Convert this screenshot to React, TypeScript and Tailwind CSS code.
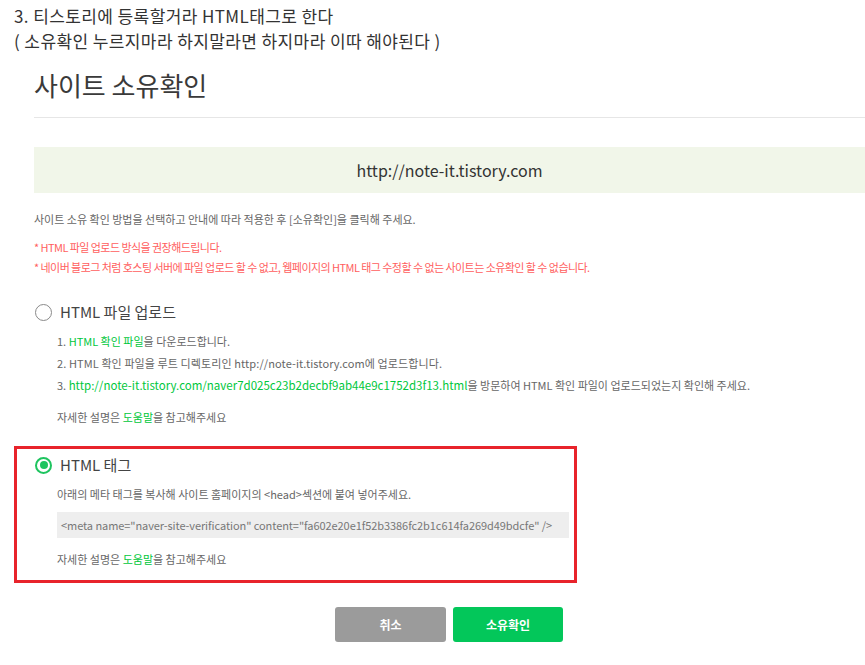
import React from 'react';

const FONT = "font-['Noto_Sans_CJK_KR','Noto_Sans',sans-serif]";

const Radio = ({ checked }: { checked?: boolean }) =>
  checked ? (
    <span className="flex h-[17px] w-[17px] items-center justify-center rounded-full border-[2px] border-[#1ec45f]">
      <span className="h-[8px] w-[8px] rounded-full bg-[#1ec45f]" />
    </span>
  ) : (
    <span className="h-[17px] w-[17px] rounded-full border-[1.5px] border-[#8a8a8a] bg-white" />
  );

const Help = () => (
  <p className="text-[11px] leading-[16px] text-[#666]">
    자세한 설명은 <span className="text-[#00c73c]">도움말</span>을 참고해주세요
  </p>
);

export default function App() {
  return (
    <div className={`${FONT} min-h-[665px] overflow-hidden bg-white text-[#333]`}>
      <div className="px-[14px] pt-[3px] text-[17px] leading-[25px] tracking-[0.4px] text-[#333]">
        <p>3. 티스토리에 등록할거라 HTML태그로 한다</p>
        <p>( 소유확인 누르지마라 하지말라면 하지마라 이따 해야된다 )</p>
      </div>

      <div className="ml-[34px]">
        <h1 className="mt-[14px] text-[26px] leading-[36px] text-[#3a3a3a]">사이트 소유확인</h1>
        <div className="mt-[14px] border-t border-[#e6e6e6]" />

        <div className="mt-[29px] flex h-[46px] items-center justify-center bg-[#f1f6e9] text-[16px] text-[#333]">
          http://note-it.tistory.com
        </div>

        <p className="mt-[18px] text-[11px] leading-[16px] text-[#666]">
          사이트 소유 확인 방법을 선택하고 안내에 따라 적용한 후 [소유확인]을 클릭해 주세요.
        </p>
        <div className="mt-[10px] text-[11px] leading-[20px] tracking-[-0.55px] text-[#ff5e5e]">
          <p>* HTML 파일 업로드 방식을 권장해드립니다.</p>
          <p>* 네이버 블로그 처럼 호스팅 서버에 파일 업로드 할 수 없고, 웹페이지의 HTML 태그 수정할 수 없는 사이트는 소유확인 할 수 없습니다.</p>
        </div>

        <div className="mt-[25px] flex h-[20px] items-center gap-[8px] pl-[1px]">
          <Radio />
          <span className="text-[15px] text-[#444]">HTML 파일 업로드</span>
        </div>
        <div className="ml-[23px] mt-[8px] whitespace-nowrap text-[11px] leading-[22px] text-[#666]">
          <p>
            1. <span className="text-[#00c73c]">HTML 확인 파일</span>을 다운로드합니다.
          </p>
          <p className="tracking-[0.1px]">2. HTML 확인 파일을 루트 디렉토리인 http://note-it.tistory.com에 업로드합니다.</p>
          <p>
            3.{' '}
            <span className="text-[11.5px] text-[#00c73c]">
              http://note-it.tistory.com/naver7d025c23b2decbf9ab44e9c1752d3f13.html
            </span>
            을 방문하여 HTML 확인 파일이 업로드되었는지 확인해 주세요.
          </p>
          <div className="mt-[13px]">
            <Help />
          </div>
        </div>
      </div>

      <div className="ml-[14px] mt-[21px] w-[563px] border-[3px] border-[#e8232b] pb-[13px] pl-[18px] pt-[6px]">
        <div className="flex h-[20px] items-center gap-[8px]">
          <Radio checked />
          <span className="text-[15px] text-[#444]">HTML 태그</span>
        </div>
        <div className="ml-[22px]">
          <p className="mt-[11px] text-[11px] leading-[16px] text-[#666]">
            아래의 메타 태그를 복사해 사이트 홈페이지의 &lt;head&gt;섹션에 붙여 넣어주세요.
          </p>
          <div className="mt-[10px] flex h-[26px] w-[512px] items-center whitespace-nowrap bg-[#eeeeee] pl-[4px] text-[11px] tracking-[-0.07px] text-[#777]">
            &lt;meta name="naver-site-verification" content="fa602e20e1f52b3386fc2b1c614fa269d49bdcfe" /&gt;
          </div>
          <div className="mt-[13px]">
            <Help />
          </div>
        </div>
      </div>

      <div className="ml-[335px] mt-[24px] flex gap-[7px]">
        <button className="h-[35px] w-[111px] rounded-[3px] bg-[#9b9b9b] text-[12px] font-bold text-white">
          취소
        </button>
        <button className="h-[35px] w-[110px] rounded-[3px] bg-[#03c75a] text-[12px] font-bold text-white">
          소유확인
        </button>
      </div>
    </div>
  );
}
